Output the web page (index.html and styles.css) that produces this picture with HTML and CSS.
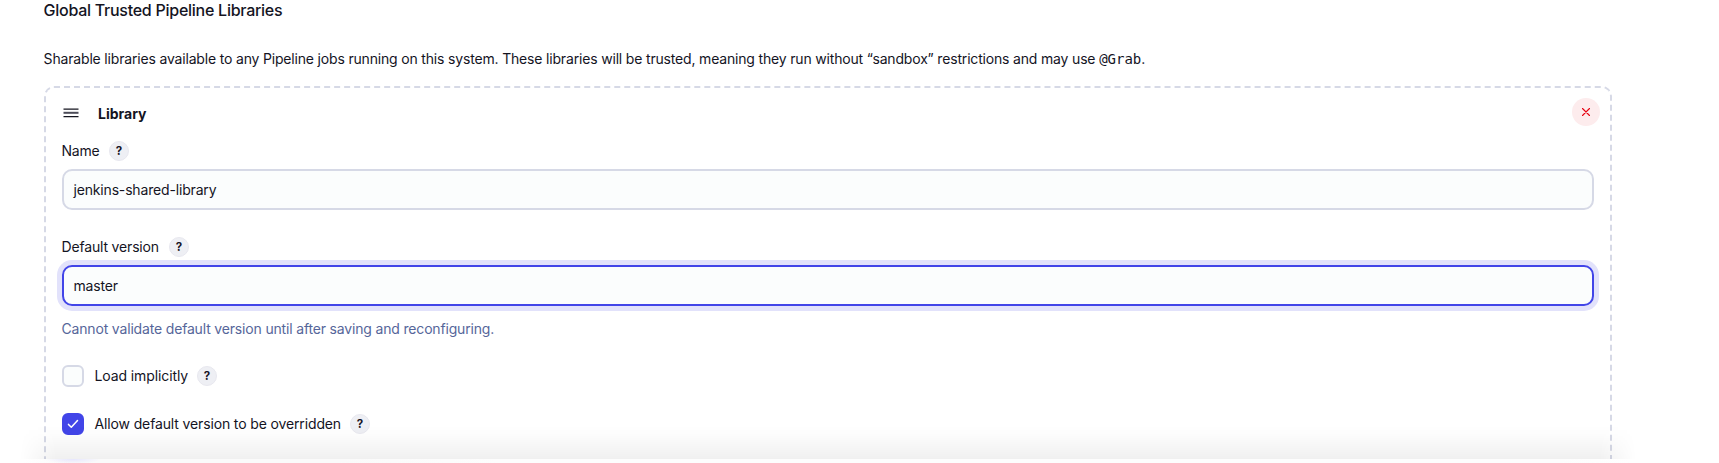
FILE: index.html
```html
<!DOCTYPE html>
<html lang="en">
<head>
<meta charset="utf-8">
<title>Global Trusted Pipeline Libraries</title>
<link rel="stylesheet" href="styles.css">
</head>
<body>
<main class="page">
  <h2 class="section-title">Global Trusted Pipeline Libraries</h2>
  <p class="description">Sharable libraries available to any Pipeline jobs running on this system. These libraries will be trusted, meaning they run without “sandbox” restrictions and may use <code>@Grab</code>.</p>
  <section class="card">
    <header class="card-header">
      <svg class="drag" viewBox="0 0 16 10" width="16" height="10"><path d="M.5 1.1h15M.5 8.6h15" stroke="#14141f" stroke-width="1.3"/><path d="M.5 4.8h15" stroke="#4c4c58" stroke-width="2"/></svg>
      <strong class="card-title">Library</strong>
      <button class="delete" aria-label="Delete"><svg viewBox="0 0 8 8" width="8" height="8"><path d="M.5.5l7 7M7.5.5l-7 7" stroke="#e6000f" stroke-width="1.1" stroke-linecap="round"/></svg></button>
    </header>
    <div class="label label-name"><span class="name-text">Name</span><span class="help">?</span></div>
    <div class="input">jenkins-shared-library</div>
    <div class="label label-version"><span class="version-text">Default version</span><span class="help">?</span></div>
    <div class="input focused">master</div>
    <p class="validation">Cannot validate default version until after saving and reconfiguring.</p>
    <div class="check-row"><span class="checkbox"></span><span class="load-text">Load implicitly</span><span class="help">?</span></div>
    <div class="check-row"><span class="checkbox checked"><svg viewBox="0 0 12 10" width="12" height="10"><path d="M1.5 5.4l2.8 2.9 6.2-6.8" fill="none" stroke="#fff" stroke-width="1.5" stroke-linecap="round" stroke-linejoin="round"/></svg></span><span class="allow-text">Allow default version to be overridden</span><span class="help">?</span></div>
  </section>
  <div class="bar-shadow"></div>
  <div class="bottom-bar"></div>
</main>
</body>
</html>
```
FILE: styles.css
```css
* { box-sizing: border-box; }
body { margin: 0; background: #fff; color: #14141f; font: 14px/20px Inter, "Liberation Sans", sans-serif; letter-spacing: -.17px; }
.page { position: relative; height: 463px; padding: 0 107px 0 44px; overflow: hidden; }
.section-title { margin: 0; height: 20px; font-size: 16px; font-weight: 500; line-height: 20px; white-space: nowrap; letter-spacing: -.26px; text-indent: -.5px; }
.description { margin: 29px 0 17px; height: 20px; white-space: nowrap; letter-spacing: -.176px; text-indent: -.4px; }
.description code { font-family: "DejaVu Sans Mono", monospace; font-size: 14px; letter-spacing: 0; }
.card { height: 520px; padding: 10px 16px; border: 2px dashed #d6d9e6; border-radius: 10px; }
.card-header { display: flex; align-items: center; height: 28px; }
.drag { margin: 1px 0 0 1px; }
.card-title { margin: 3px 0 0 19px; font-weight: 700; letter-spacing: 0; }
.delete { display: grid; place-items: center; width: 28px; height: 28px; margin: 0 -6px 0 auto; padding: 0; border: 0; border-radius: 50%; background: #fdeced; }
.label { display: flex; align-items: center; height: 20px; text-indent: -.5px; white-space: nowrap; }
.label-name { margin: 15px 0 8px; }
.label-version { margin: 27px 0 8px; }
.name-text { width: 47px; letter-spacing: -.25px; }
.version-text { width: 107px; }
.load-text { width: 102px; letter-spacing: -.1px; }
.allow-text { width: 255px; letter-spacing: -.135px; }
.help { display: grid; place-items: center; width: 20px; height: 20px; border: 1px solid #e8e8ef; border-radius: 50%; background: #eeeff4; font-size: 11.5px; font-weight: 700; line-height: 18px; letter-spacing: 0; text-indent: 0; }
.input { display: flex; align-items: center; height: 41px; padding: 0 10px 0 9.5px; border: 2px solid #d6d9e6; border-radius: 10px; background: #fbfdfd; }
.focused { border-color: #4245e8; box-shadow: 0 0 0 5px #e2e2fb; }
.validation { margin: 13px 0 26px; height: 20px; color: #56669a; text-indent: -.5px; }
.check-row { display: flex; align-items: center; height: 22px; margin-bottom: 26px; white-space: nowrap; text-indent: -.5px; }
.checkbox { display: grid; place-items: center; width: 22px; height: 22px; margin-right: 11px; border: 2px solid #d6d9e6; border-radius: 6px; background: #fbfdfd; }
.checkbox.checked { border-color: #4245e8; background: #4245e8; }
.bar-shadow { position: absolute; left: 20px; right: 83px; bottom: 4px; height: 34px; background: linear-gradient(to bottom, rgba(0,0,0,0), rgba(0,0,0,.012) 30%, rgba(0,0,0,.06)); -webkit-mask-image: linear-gradient(to right, transparent, #000 36px, #000 calc(100% - 36px), transparent); mask-image: linear-gradient(to right, transparent, #000 36px, #000 calc(100% - 36px), transparent); }
.bottom-bar { position: absolute; left: 0; right: 0; bottom: 0; height: 4px; background: radial-gradient(ellipse 28px 5px at 73px 0, #e6e6fd, rgba(250,250,250,0)), linear-gradient(to right, #fff 24px, #fafafa 70px, #fafafa 340px, #fdfdfd 500px, #fdfdfd 1560px, #fff 1630px); }
```
